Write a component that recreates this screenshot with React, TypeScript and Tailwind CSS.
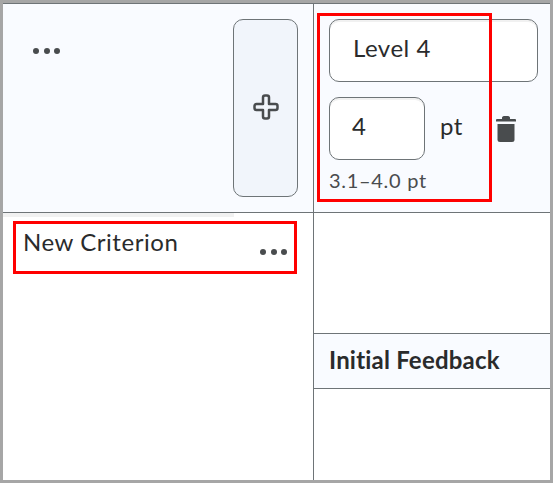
function Dots() {
  return (
    <div className="flex gap-[4.500px]">
      <span className="h-[6px] w-[6px] rounded-full bg-[#494c4e]" />
      <span className="h-[6px] w-[6px] rounded-full bg-[#494c4e]" />
      <span className="h-[6px] w-[6px] rounded-full bg-[#494c4e]" />
    </div>
  );
}

function PlusOutline() {
  return (
    <svg width="28" height="28" viewBox="0 0 28 28" fill="none" className="-mt-[2px]">
      <path
        d="M11 4.500a2 2 0 0 1 2-2h2a2 2 0 0 1 2 2V11h6.500a2 2 0 0 1 2 2v2a2 2 0 0 1-2 2H17v6.500a2 2 0 0 1-2 2h-2a2 2 0 0 1-2-2V17H4.500a2 2 0 0 1-2-2v-2a2 2 0 0 1 2-2H11z"
        stroke="#494c4e"
        strokeWidth="2.500"
        strokeLinejoin="round"
      />
    </svg>
  );
}

function TrashIcon() {
  return (
    <svg width="22" height="28" viewBox="0 0 22 28" fill="#494c4e">
      <path d="M7 2.500a2 2 0 0 1 2-1.500h4a2 2 0 0 1 2 1.500V4h5a1 1 0 0 1 1 1v1.500H1V5a1 1 0 0 1 1-1h5z" />
      <path d="M2.500 9h17v15.500a2.500 2.500 0 0 1-2.500 2.500H5a2.500 2.500 0 0 1-2.500-2.500z" />
    </svg>
  );
}

export default function App() {
  return (
    <div
      className="relative flex h-[483px] w-[553px] flex-col border-[3px] border-[#a6a6a6] bg-white text-[#2a2b2c]"
      style={{ fontFamily: "Lato, 'Open Sans', sans-serif" }}
    >
      <div className="flex h-[210px] border-y border-[#6e7477]">
        <div className="flex w-[310px] justify-between bg-[#f9fbff]">
          <div className="pl-[30px] pt-[44px]">
            <Dots />
          </div>
          <button className="mr-[15px] mt-[15px] flex h-[178px] w-[65px] items-center justify-center rounded-[10px] border border-[#6e7477] bg-[#f1f5fb]">
            <PlusOutline />
          </button>
        </div>
        <div className="flex-1 border-l border-[#6e7477] bg-[#f9fbff] pl-[15px] pt-[15px]">
          <div className="flex h-[63px] w-[209px] items-center rounded-[10px] border border-[#6e7477] bg-white pb-[6px] pl-[23px] text-[24px] leading-none tracking-[0.5px] shadow-[inset_0_2px_0_#f1f1f1]">
            Level 4
          </div>
          <div className="mt-[15px] flex items-center">
            <div className="flex h-[63px] w-[96px] items-center rounded-[10px] border border-[#6e7477] bg-white pb-[6px] pl-[22px] text-[24px] leading-none shadow-[inset_0_2px_0_#f1f1f1]">
              4
            </div>
            <span className="ml-[15px] pb-[6px] text-[24px] leading-none tracking-[0.5px]">pt</span>
            <span className="ml-[32px] flex">
              <TrashIcon />
            </span>
          </div>
          <div className="mt-[9px] text-[20px] leading-[22px] tracking-[0.7px] text-[#494c4e]">3.1–4.0 pt</div>
        </div>
      </div>
      <div className="flex flex-1">
        <div className="w-[310px]">
          <div className="h-[4px] w-[231px] bg-[#f1f1f1]" />
          <div className="pl-[20px] pt-[11px] text-[24px] leading-[28px] tracking-[0.55px]">New Criterion</div>
          <div className="-mt-[7px] flex justify-end pr-[26px]">
            <Dots />
          </div>
        </div>
        <div className="flex flex-1 flex-col border-l border-[#6e7477]">
          <div className="h-[120px]" />
          <div className="flex h-[56px] items-center border-y border-[#6e7477] bg-[#f9fbff] pb-[2px] pl-[15px] text-[24px] font-bold leading-none tracking-[0.2px]">
            Initial Feedback
          </div>
        </div>
      </div>
      {/* Red annotation boxes */}
      <div className="absolute left-[314px] top-[10px] h-[189px] w-[175px] border-[3px] border-[#ff0000]" />
      <div className="absolute left-[10px] top-[218px] h-[53px] w-[284px] border-[3px] border-[#ff0000]" />
    </div>
  );
}
